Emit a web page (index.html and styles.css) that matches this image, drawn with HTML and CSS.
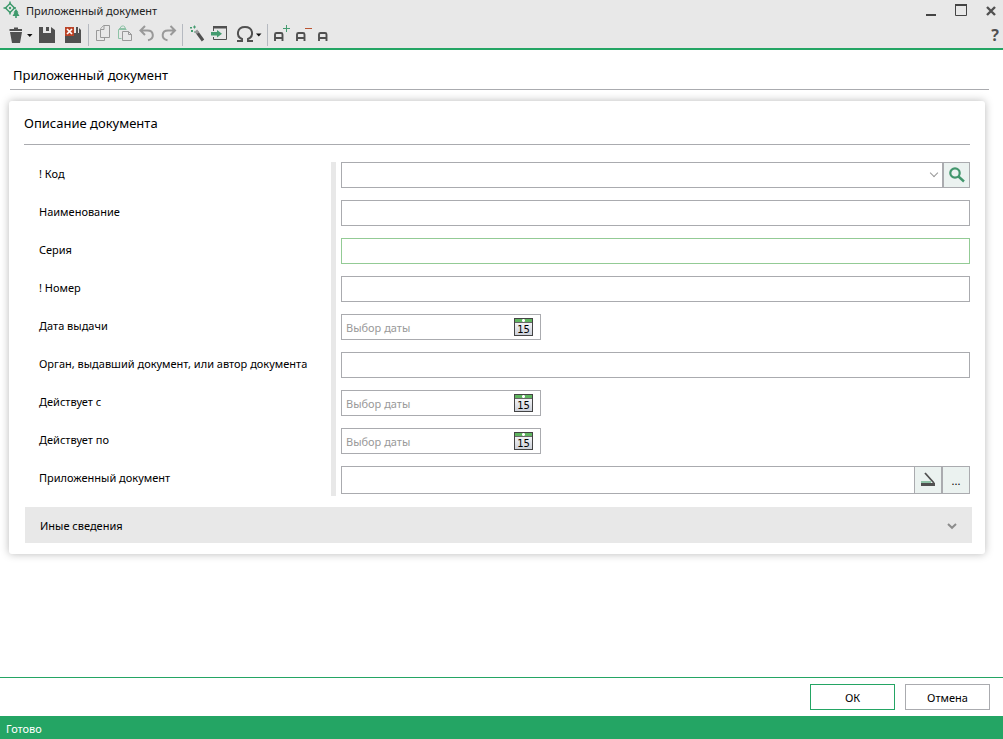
FILE: index.html
```html
<!DOCTYPE html>
<html lang="ru">
<head>
<meta charset="utf-8">
<title>Приложенный документ</title>
<link rel="stylesheet" href="styles.css">
</head>
<body>
<header class="window-head">
  <div class="titlebar">
    <svg class="app-logo" width="18" height="20" viewBox="3 1 18 20" aria-hidden="true">
      <g fill="none" stroke="#3f9a6d" stroke-width="1.5"><path d="M10 3.500L14.500 8L10 12.500L5.500 8Z"/><path d="M10 1.500V5M10 11V14.500M3.500 8H7M13 8H16"/></g>
      <circle cx="10" cy="8" r="1.200" fill="#3f9a6d"/>
      <path d="M16 9L18.500 12.500H17.500L19.500 16H16.800V18H15.200V16H12.500L14.500 12.500H13.500Z" fill="#3f9a6d"/>
    </svg>
    <span class="title">Приложенный документ</span>
    <button class="win-btn" aria-label="Свернуть"><svg width="30" height="22" viewBox="916 0 30 22"><path d="M926 14h10v2h-10z" fill="#444"/></svg></button>
    <button class="win-btn" aria-label="Развернуть"><svg width="30" height="22" viewBox="946 0 30 22"><path d="M955.500 5V15.500H966.500V5" fill="none" stroke="#444"/><path d="M955 4h12v2h-12z" fill="#444"/></svg></button>
    <button class="win-btn" aria-label="Закрыть"><svg width="27" height="22" viewBox="976 0 27 22"><path d="M987 7L995 15M995 7L987 15" stroke="#505050" stroke-width="2.400"/></svg></button>
  </div>
  <div class="toolbar">
    <button class="tool" aria-label="Удалить"><svg width="29" height="22" viewBox="6 24 29 22"><path d="M14 27.500h4v1.500h4v2H9.500v-2H14zM10 32h12l-2 11h-8z" fill="#505050"/><path d="M27 34h5.500l-2.700 3z" fill="#111"/></svg></button>
    <button class="tool" aria-label="Сохранить"><svg width="25" height="22" viewBox="35 24 25 22"><path d="M39 27h4v6h8v-6l4 3v13H39z" fill="#505050"/><path d="M46 27h3v4h-3z" fill="#505050"/></svg></button>
    <button class="tool" aria-label="Сохранить и закрыть"><svg width="25" height="22" viewBox="60 24 25 22"><path d="M65 27h13l3 3v13H65z" fill="#505050"/><path d="M74 27h2v6h-2zM78 27h1v6h-1z" fill="#e8e8e8"/><path d="M65 27h9v9h-9z" fill="#bb4428"/><path d="M67 29l5 5M72 29l-5 5" stroke="#fff" stroke-width="1.700"/></svg></button>
    <span class="sep"></span>
    <button class="tool" aria-label="Копировать"><svg width="22" height="22" viewBox="91 24 22 22"><g fill="#e8e8e8" stroke="#999"><path d="M99.500 30.500h-3v10h8v-3"/><path d="M100.500 29l3-3.500h6v12h-9z"/><path d="M100.500 29.500h3.500v-4"/></g></svg></button>
    <button class="tool" aria-label="Вставить"><svg width="22" height="22" viewBox="113 24 22 22"><path d="M121.500 38.500h-3v-9h8M120.500 29v-2l1.500-1h1.500l1.500 1v2" fill="none" stroke="#8fc3a7"/><path d="M119 28h7v2h-7z" fill="#8fc3a7"/><g fill="#e8e8e8" stroke="#999"><path d="M122.500 31.500h6l3 3v6h-9z"/><path d="M128.500 31.500v3h3" fill="none"/></g></svg></button>
    <button class="tool" aria-label="Отменить"><svg width="22" height="22" viewBox="135 24 22 22"><path d="M145 26L140.500 30.500L145 35M141 30.500H147.500C154 30.500 155 39 148 40.200" fill="none" stroke="#999" stroke-width="2"/></svg></button>
    <button class="tool" aria-label="Повторить"><svg width="22" height="22" viewBox="157 24 22 22"><path d="M170.500 26L175 30.500L170.500 35M174.500 30.500H168C161.500 30.500 160.500 39 167.500 40.200" fill="none" stroke="#999" stroke-width="2"/></svg></button>
    <span class="sep"></span>
    <button class="tool" aria-label="Мастер"><svg width="22" height="22" viewBox="185 24 22 22"><path d="M196.500 31.500l6.500 9" stroke="#505050" stroke-width="3"/><path d="M196 30.500l2 2.600" stroke="#999" stroke-width="3"/><path d="M194 25.500h1v1h1v1h-1v1h-1v-1h-1v-1h1zM190 27h2v1.500h-2zM191 30h2v2h-2zM194 31.500h1v1h-1z" fill="#459c70"/></svg></button>
    <button class="tool" aria-label="Загрузить"><svg width="22" height="22" viewBox="207 24 22 22"><path d="M213.500 31v-4h13v12.500h-13V37" fill="none" stroke="#505050"/><path d="M213 26h14v2.500h-14z" fill="#505050"/><path d="M211 32h6v-2l5 3.800-5 3.800v-2h-6z" fill="#459c70"/></svg></button>
    <button class="tool" aria-label="Символы"><svg width="35" height="22" viewBox="229 24 35 22"><path d="M237 41h5v-2C235.500 36 237 27 245 27S254.500 36 248 39v2h5" fill="none" stroke="#505050" stroke-width="2"/><path d="M256 33.500h5.500l-2.700 3z" fill="#111"/></svg></button>
    <span class="sep"></span>
    <button class="tool" aria-label="Добавить поле"><svg width="22" height="22" viewBox="270 24 22 22"><path d="M275 41v-6.500q0-1.500 1.500-1.500h4.500q1.500 0 1.500 1.500V41M275 38h7.500" fill="none" stroke="#505050" stroke-width="1.900"/><path d="M286.500 25v7M283 28.500h7" stroke="#459c70"/></svg></button>
    <button class="tool" aria-label="Убрать поле"><svg width="22" height="22" viewBox="292 24 22 22"><path d="M297 41v-6.500q0-1.500 1.500-1.500h4.500q1.500 0 1.500 1.500V41M297 38h7.500" fill="none" stroke="#505050" stroke-width="1.900"/><path d="M305 28.500h7" stroke="#bb5533"/></svg></button>
    <button class="tool" aria-label="Поле"><svg width="22" height="22" viewBox="314 24 22 22"><path d="M319 41v-6.500q0-1.500 1.500-1.500h4.500q1.500 0 1.500 1.500V41M319 38h7.500" fill="none" stroke="#505050" stroke-width="1.900"/></svg></button>
    <button class="help" aria-label="Справка">?</button>
  </div>
</header>

<main class="content">
  <h1 class="page-title">Приложенный документ</h1>
  <section class="card">
    <h2 class="card-title">Описание документа</h2>
    <form class="fields" id="doc">
      <div class="labels">
        <label for="code">! Код</label>
        <label for="name">Наименование</label>
        <label for="series">Серия</label>
        <label for="number">! Номер</label>
        <label for="issued">Дата выдачи</label>
        <label for="issuer">Орган, выдавший документ, или автор документа</label>
        <label for="from">Действует с</label>
        <label for="to">Действует по</label>
        <label for="file">Приложенный документ</label>
      </div>
      <div class="controls">
        <div class="box combo">
          <select class="entry code" id="code"><option></option></select>
          <button type="button" class="side search" aria-label="Найти"><svg width="18" height="18" viewBox="0 0 18 18"><circle cx="7" cy="7" r="4.700" fill="none" stroke="#42966c" stroke-width="2.200"/><path d="M10.500 10.500l5.500 5" stroke="#42966c" stroke-width="2.400"/></svg></button>
        </div>
        <div class="box"><input class="entry" id="name" type="text"></div>
        <div class="box active"><input class="entry" id="series" type="text"></div>
        <div class="box"><input class="entry" id="number" type="text"></div>
        <div class="box date"><input class="entry" id="issued" type="text" placeholder="Выбор даты"><button type="button" class="calendar" aria-label="Календарь"><span class="calendar-top"></span><span class="calendar-day">15</span></button></div>
        <div class="box"><input class="entry" id="issuer" type="text"></div>
        <div class="box date"><input class="entry" id="from" type="text" placeholder="Выбор даты"><button type="button" class="calendar" aria-label="Календарь"><span class="calendar-top"></span><span class="calendar-day">15</span></button></div>
        <div class="box date"><input class="entry" id="to" type="text" placeholder="Выбор даты"><button type="button" class="calendar" aria-label="Календарь"><span class="calendar-top"></span><span class="calendar-day">15</span></button></div>
        <div class="box tall">
          <input class="entry" id="file" type="text">
          <button type="button" class="side" aria-label="Сканировать"><svg width="16" height="16" viewBox="0 0 16 16"><path d="M5 1l9 10" stroke="#505050" stroke-width="1.800"/><path d="M1 9h10v2H1z" fill="#8fc3a7"/><path d="M1 11h14v3H1z" fill="#505050"/></svg></button>
          <button type="button" class="side more">...</button>
        </div>
      </div>
    </form>
    <button class="expander" aria-expanded="false">Иные сведения<svg width="10" height="8" viewBox="0 0 10 8"><path d="M1 2l4 3.800L9 2" fill="none" stroke="#8c8c8c" stroke-width="2"/></svg></button>
  </section>
</main>

<footer>
  <div class="actions">
    <button class="btn primary">ОК</button>
    <button class="btn">Отмена</button>
  </div>
  <div class="status">Готово</div>
</footer>
</body>
</html>
```
FILE: styles.css
```css
* { box-sizing: border-box; }
body {
  margin: 0;
  min-height: 100vh;
  display: flex;
  flex-direction: column;
  background: #fff;
  color: #000;
  font: 11px/16px "Noto Sans", "Open Sans", sans-serif;
}
button, input, select { font: inherit; color: inherit; margin: 0; }
button { padding: 0; border: 0; background: none; }
svg { display: block; }

.window-head { background: #e8e8e8; border-bottom: 2px solid #24a564; }
.titlebar { display: flex; align-items: center; height: 22px; padding-left: 3px; }
.title { flex: 1; padding-left: 5px; color: #222; }
.toolbar { display: flex; align-items: center; height: 26px; padding: 0 4px 0 6px; }
.sep { width: 1px; height: 22px; margin: 0 2px 0 3px; background: #b5b9c0; }
.help { margin-left: auto; font-size: 16px; line-height: 20px; font-weight: 700; color: #505050; }

.content { flex: 1; padding: 15px 18px 0 9px; }
.page-title, .card-title { margin: 0; font-size: 13px; font-weight: 400; }
.page-title {
  line-height: 20px;
  height: 25px;
  margin: 0 -4px 11px 1px;
  padding-left: 3px;
  border-bottom: 1px solid #aaabaf;
}
.card {
  padding: 12px 15px 11px;
  border-radius: 3px;
  box-shadow: 0 0 8px rgba(0, 0, 0, .28);
}
.card-title { line-height: 20px; height: 32px; border-bottom: 1px solid #aaabaf; }

.fields { display: flex; margin-top: 17px; }
.labels { width: 312px; padding: 4px 0 2px 15px; border-right: 5px solid #e8e8e8; display: grid; grid-auto-rows: 16px; row-gap: 22px; }
.controls { flex: 1; margin-left: 5px; display: flex; flex-direction: column; gap: 12px; padding-bottom: 2px; }
.box { display: flex; height: 26px; border: 1px solid #aaabaf; background: #fff; }
.box.active { border-color: #93cb95; }
.box.tall { height: 28px; }
.box.date { width: 200px; }
.box.combo { position: relative; }
.box.combo::after {
  content: "";
  position: absolute;
  right: 32px;
  top: 7px;
  width: 5px;
  height: 5px;
  border: solid #999;
  border-width: 0 1px 1px 0;
  transform: rotate(45deg);
}
.entry { flex: 1; min-width: 0; border: 0; padding: 2px 4px 0; background: none; outline: none; }
.entry::placeholder { color: #999; opacity: 1; }
.code { appearance: none; }
.side { display: grid; place-items: center; width: 27px; background: #ebf2f0; border-left: 1px solid #aaabaf; }
.side.search { border-left-width: 2px; }
.side.more { width: 28px; border-left-width: 2px; padding-top: 2px; }
.calendar {
  align-self: center;
  width: 19px;
  height: 18px;
  margin-right: 7px;
  border: 1px solid #444;
  background: linear-gradient(#fff, #cdd1da);
}
.calendar-top { display: block; height: 4px; background: radial-gradient(circle, #fff 1px, transparent 2px) center, #5fb55f; border-bottom: 1px solid #666; }
.calendar-day { display: block; font: 10px/13px "DejaVu Sans", sans-serif; color: #000; }

.expander {
  display: flex;
  align-items: center;
  justify-content: space-between;
  width: calc(100% + 1px);
  height: 36px;
  margin: 11px 0 0 1px;
  padding: 1px 15px 0;
  background: #e8e8e8;
}

.actions { display: flex; justify-content: flex-end; gap: 10px; padding: 6px 13px 6px 0; border-top: 1px solid #24a564; }
.btn { width: 85px; height: 26px; padding-top: 1px; border: 1px solid #aaabaf; background: #fff; }
.btn.primary { border-color: #24a564; }
.status { height: 23px; padding: 5px 6px 2px; background: #24a564; color: #fff; }
```
